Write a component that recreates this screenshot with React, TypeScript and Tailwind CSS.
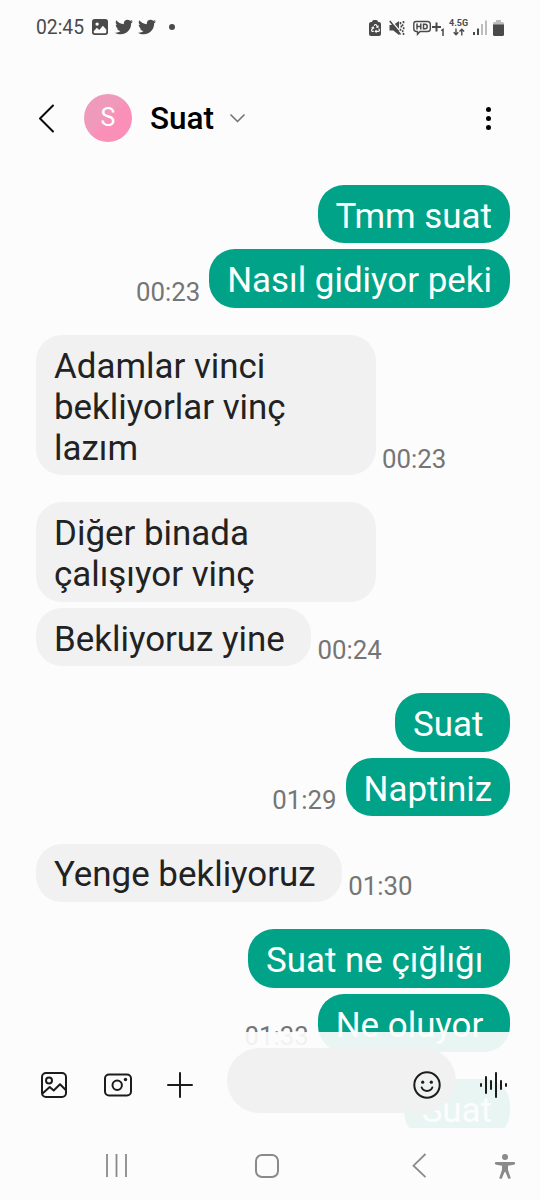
import React from "react";
import { FaTwitter, FaRecycle } from "react-icons/fa";

type Message = { text: string; time?: string };
type Group = { from: "me" | "them"; messages: Message[] };

// some messages were sent with a trailing space, so the bubble is a bit wider
const groups: Group[] = [
  {
    from: "me",
    messages: [{ text: "Tmm suat" }, { text: "Nasıl gidiyor peki", time: "00:23" }],
  },
  {
    from: "them",
    messages: [{ text: "Adamlar vinci bekliyorlar vinç lazım", time: "00:23" }],
  },
  {
    from: "them",
    messages: [
      { text: "Diğer binada çalışıyor vinç" },
      { text: "Bekliyoruz yine ", time: "00:24" },
    ],
  },
  {
    from: "me",
    messages: [{ text: "Suat " }, { text: "Naptiniz", time: "01:29" }],
  },
  { from: "them", messages: [{ text: "Yenge bekliyoruz ", time: "01:30" }] },
  {
    from: "me",
    messages: [{ text: "Suat ne çığlığı " }, { text: "Ne oluyor ", time: "01:33" }],
  },
  { from: "me", messages: [{ text: "Suat" }] },
];

const StatusBar: React.FC = () => (
  <div className="flex h-[55px] items-center justify-between pl-9 pr-[36px] text-[#4a4a4a]">
    <div className="flex items-center">
      <span className="w-[56px] pt-px text-[19.3px] leading-none">02:45</span>
      <svg width="16" height="16" viewBox="0 0 15 15">
        <rect width="15" height="15" rx="2.5" fill="currentColor" />
        <circle cx="4.8" cy="4.8" r="1.6" fill="#fcfcfc" />
        <path d="M1.6 11.5 4.5 8.2l2.3 2.2 3.4-4 3.2 3.4v2.4q0 1.2-1.2 1.2H2.8q-1.2 0-1.2-1.2z" fill="#fcfcfc" />
      </svg>
      <FaTwitter className="ml-[7px] size-[18px]" />
      <FaTwitter className="ml-[5px] size-[18px]" />
      <span className="ml-[13px] size-1.5 rounded-full bg-[#4a4a4a]" />
    </div>

    <div className="flex items-center">
      <span className="flex flex-col items-center">
        <span className="h-[2px] w-1.5 rounded-t-sm bg-[#4a4a4a]" />
        <span className="flex h-[14px] w-3 items-center justify-center rounded-[2px] bg-[#4a4a4a]">
          <FaRecycle className="size-[9px] text-[#fcfcfc]" />
        </span>
      </span>
      <svg className="ml-2" width="16" height="16" viewBox="0 0 16 16" fill="none" stroke="currentColor">
        <path d="M0.5 5h3.8L10 1v14l-5.7-4.5H.5z" fill="currentColor" stroke="none" />
        <path d="M2 0.5l9 10.5" stroke="#fcfcfc" strokeWidth="1.2" />
        <path d="M0.8 1l10.700 13.600" strokeWidth="1.6" />
        <path d="M11.5 2v2.200M12.300 5.500v2M11.500 8.800v2M14.500 1v2.200M13.600 4.200v2M14.700 7.200v2M13.700 10.200v2M14.500 13v2" strokeWidth="1.600" />
      </svg>
      <div className="ml-2 flex h-4 items-center">
        <svg width="18" height="16" viewBox="0 0 18 16" fill="none" stroke="currentColor" strokeWidth="1.4">
          <path d="M3 1.500h11.500q2.800 0 2.800 2.800v4.400q0 2.800-2.800 2.800H7L4.500 14.300V11.500H3.500Q.8 11.500.8 8.700V3.700Q.8 1.500 3 1.500z" />
          <path d="M4 3.500v6M7.800 3.500v6M4 6.500h3.800M10.500 4.200v4.600h1.700q2 0 2-2.300t-2-2.300z" strokeWidth="1.500" />
        </svg>
        <svg className="ml-px" width="13" height="16" viewBox="0 0 13 16" fill="none" stroke="currentColor">
          <path d="M0 7h9M4.5 2.5v9" strokeWidth="2" />
          <path d="M9.3 10.7l1.7-1.2V16" strokeWidth="1.5" />
        </svg>
      </div>
      <div className="ml-[4px] flex w-[19px] flex-col items-center">
        <span className="text-[9px] font-bold leading-[9px]">4.5G</span>
        <svg width="12" height="8" viewBox="0 0 12 8" fill="none" stroke="currentColor" strokeWidth="1.4">
          <path d="M3 0.5v6M.7 4.3 3 6.7l2.3-2.4M8.8 7.5v-6M6.5 3.6l2.3-2.4 2.3 2.4" />
        </svg>
      </div>
      <svg className="ml-[5px]" width="14" height="15" viewBox="0 0 14 15">
        <path d="M0 12h2v3H0zM4 8.5h2V15H4z" fill="#4a4a4a" />
        <path d="M8 4h2v11H8zM12 0.5h2V15h-2z" fill="#bdbdbd" />
      </svg>
      <svg className="ml-[6px]" width="11" height="16" viewBox="0 0 11 16">
        <path d="M3 0h5v2h1.5Q11 2 11 3.5V5H0V3.5Q0 2 1.5 2H3z" fill="#bdbdbd" />
        <path d="M0 4.5h11v10q0 1.5-1.5 1.5h-8Q0 16 0 14.5z" fill="#4a4a4a" />
      </svg>
    </div>
  </div>
);

const Header: React.FC = () => (
  <header className="flex h-[126px] items-center pl-[38px] pr-[49px]">
    <svg width="17" height="29" viewBox="0 0 17 29" fill="none" stroke="#0a0a0a" strokeWidth="2" strokeLinecap="round" strokeLinejoin="round">
      <path d="M15 1.5 2 14.5l13 13" />
    </svg>
    <div className="ml-[29px] flex size-12 items-center justify-center rounded-full bg-linear-to-br from-[#ef9abb] from-45% to-[#fa90b7] to-55% text-[25px] text-white">
      S
    </div>
    <h1 className="ml-[18px] pt-0.5 text-[31.5px] font-medium leading-none text-black">Suat</h1>
    <svg className="ml-[16px]" width="15" height="9" viewBox="0 0 15 9" fill="none" stroke="#777" strokeWidth="1.7" strokeLinecap="round" strokeLinejoin="round">
      <path d="M1 1l6.5 6.5L14 1" />
    </svg>
    <div className="ml-auto flex flex-col gap-[4px]">
      <span className="size-[5px] rounded-full bg-black" />
      <span className="size-[5px] rounded-full bg-black" />
      <span className="size-[5px] rounded-full bg-black" />
    </div>
  </header>
);

const Bubble: React.FC<{ message: Message; mine: boolean }> = ({ message, mine }) => (
  <div className={`flex items-end ${mine ? "flex-row-reverse gap-[9px]" : "gap-[6px]"}`}>
    <div
      className={`max-w-[340px] whitespace-pre-wrap rounded-[26px] px-[18px] pb-[5.8px] pt-[11.8px] text-[34.9px] leading-[40.8px] ${
        mine ? "bg-[#00a387] text-white" : "bg-[#f1f1f1] text-[#222]"
      }`}
    >
      {message.text}
    </div>
    {message.time && (
      <span className="text-[25.8px] leading-[32px] text-[#757575]">{message.time}</span>
    )}
  </div>
);

const Composer: React.FC = () => (
  <div className="absolute inset-x-0 bottom-0 flex h-24 items-center bg-[#fcfcfc]/92 text-[#1c1c1c]">
    <svg className="ml-10 mt-[9px]" width="28" height="28" viewBox="0 0 28 28" fill="none" stroke="currentColor" strokeWidth="2" strokeLinejoin="round">
      <rect x="2" y="2" width="24" height="24" rx="4" />
      <circle cx="9" cy="9.5" r="3" />
      <path d="M2.5 22.5 9.7 16l4 3.5 6.3-6.3 6 6" />
    </svg>
    <svg className="ml-[35px] mt-[9px]" width="29" height="28" viewBox="0 0 29 28" fill="none" stroke="currentColor" strokeWidth="2">
      <rect x="2" y="3.5" width="26" height="21" rx="4" />
      <circle cx="14.2" cy="14.2" r="4.7" />
      <circle cx="22.5" cy="8.5" r="1.7" fill="currentColor" stroke="none" />
    </svg>
    <svg className="ml-[34px] mt-[9px]" width="28" height="28" viewBox="0 0 28 28" fill="none" stroke="currentColor" strokeWidth="2" strokeLinecap="round">
      <path d="M14 2v24M2 14h24" />
    </svg>
    <div className="ml-[33px] flex h-[65px] w-[229px] items-center justify-end rounded-full bg-[#f0f0f0]/95 pr-[15px]">
      <svg className="mt-[9px]" width="28" height="28" viewBox="0 0 28 28" fill="none" stroke="currentColor" strokeWidth="2" strokeLinecap="round">
        <circle cx="14" cy="14" r="12.7" />
        <path d="M8.7 16.5c1.8 4.5 8.8 4.5 10.6 0" />
        <circle cx="9.7" cy="11.2" r="1.6" fill="currentColor" stroke="none" />
        <circle cx="18.3" cy="11.2" r="1.6" fill="currentColor" stroke="none" />
      </svg>
    </div>
    <svg className="ml-[22px] mt-[9px]" width="30" height="28" viewBox="0 0 30 28" fill="none" stroke="currentColor" strokeWidth="2" strokeLinecap="round">
      <path d="M3 13v2M8 6v16M13 10v8M18 2v24M23 10v8M28 13v2" />
    </svg>
  </div>
);

const NavBar: React.FC = () => (
  <nav className="flex h-[72px] items-start pt-6 text-[#8a8a8a]">
    <svg className="ml-[105px]" width="24" height="28" viewBox="0 0 24 28" fill="none" stroke="currentColor" strokeWidth="1.8">
      <path d="M2 2v23M11.5 2v23M21 2v23" />
    </svg>
    <div className="ml-[126px] mt-[2px] size-[24px] rounded-[7px] border-2 border-[#8a8a8a]" />
    <svg className="ml-[132px]" width="16" height="28" viewBox="0 0 16 28" fill="none" stroke="currentColor" strokeWidth="1.8">
      <path d="M14.5 2 2.5 13.7l12 11.5" />
    </svg>
    <svg className="ml-[67px] mt-[1px]" width="22" height="27" viewBox="0 0 22 27" fill="currentColor">
      <circle cx="11" cy="4" r="3" />
      <path d="M2.2 9h17.6a1.3 1.3 0 0 1 0 2.7L14 12.7v4l2.8 8.6-2.4.8L11.4 19h-.8l-3 7.1-2.4-.8L8 16.7v-4l-5.8-1A1.3 1.3 0 0 1 2.2 9z" />
    </svg>
  </nav>
);

export default function App() {
  return (
    <div className="flex h-[1200px] w-[540px] flex-col overflow-hidden bg-[#fcfcfc] font-[Roboto,sans-serif]">
      <StatusBar />
      <Header />
      <main className="relative flex-1 overflow-hidden">
        <div className="flex flex-col gap-[27.3px] pl-9 pr-[30px] pt-1">
          {groups.map((group, i) => (
            <div key={i} className="flex flex-col gap-[6.1px]">
              {group.messages.map((message, j) => (
                <Bubble key={j} message={message} mine={group.from === "me"} />
              ))}
            </div>
          ))}
        </div>
        <Composer />
      </main>
      <NavBar />
    </div>
  );
}
